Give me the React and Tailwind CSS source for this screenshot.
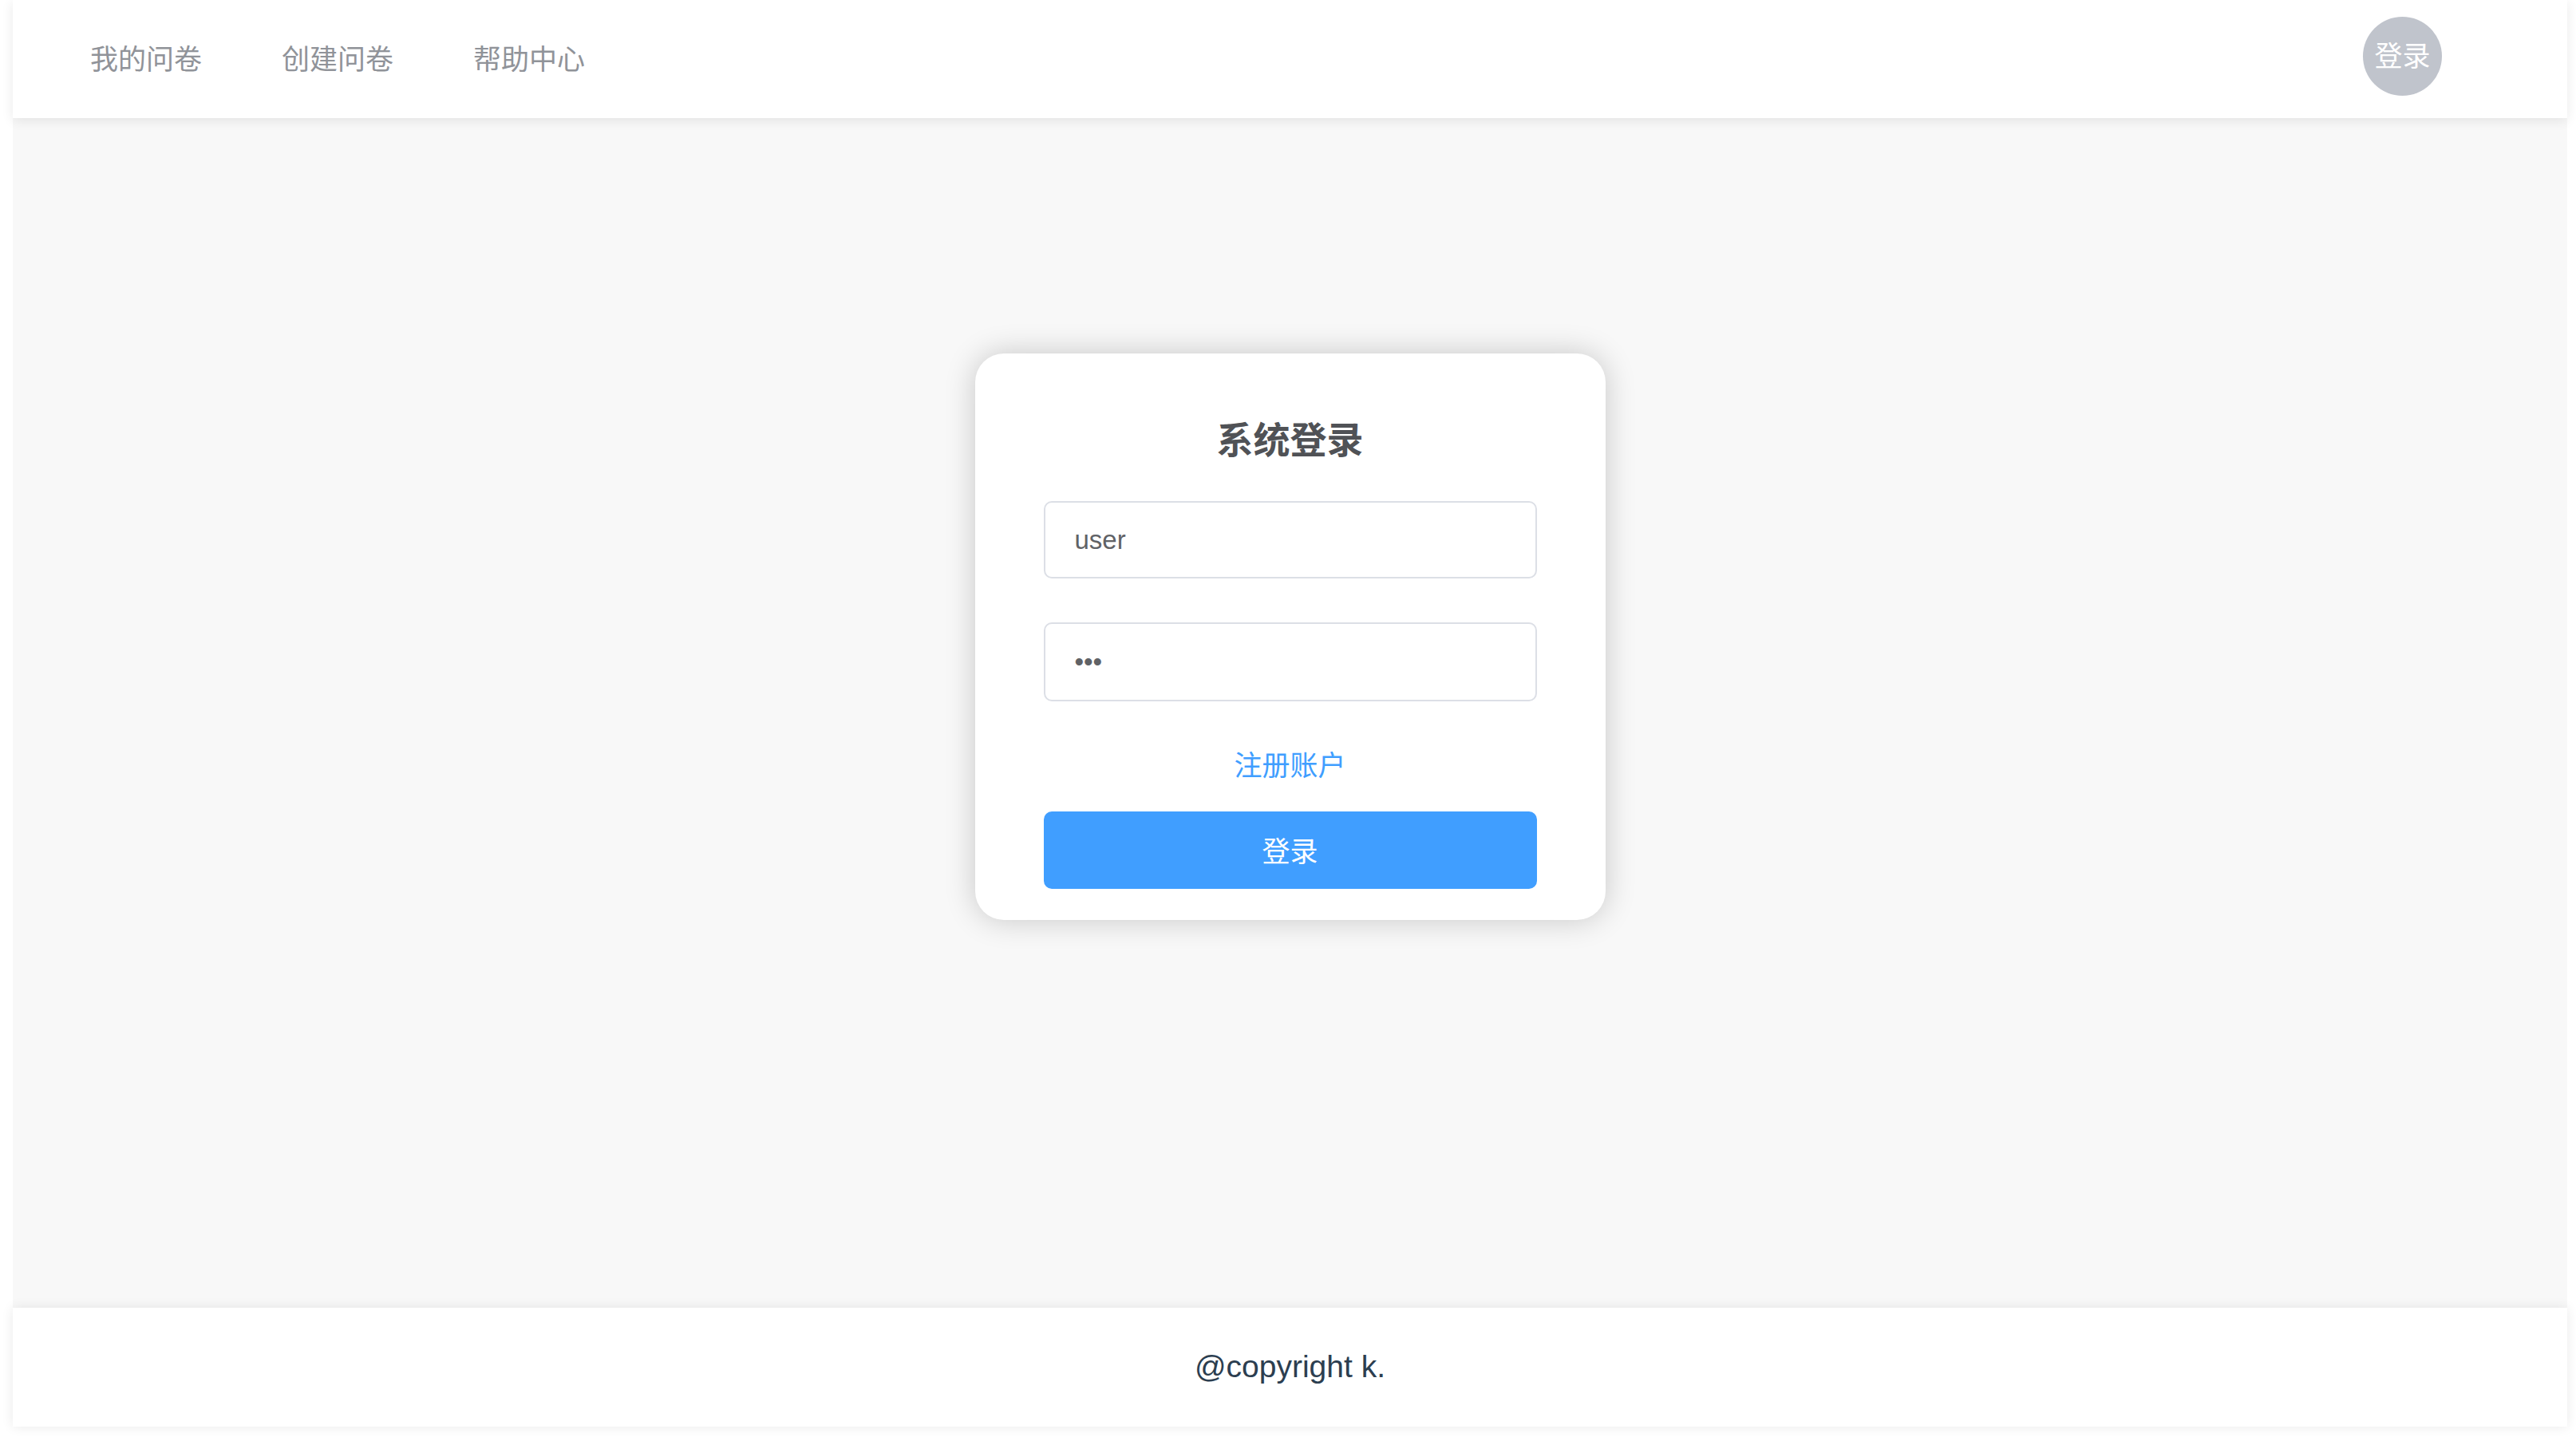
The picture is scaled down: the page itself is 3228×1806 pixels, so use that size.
import React, { useState } from "react";

const navItems = ["我的问卷", "创建问卷", "帮助中心"];

const App = () => {
  const [username, setUsername] = useState("user");
  const [password, setPassword] = useState("123");

  return (
    <div className="min-h-screen flex flex-col bg-white pl-[16px] pr-[11px] pb-[18px] font-['Liberation_Sans','Noto_Sans_CJK_SC',sans-serif]">
      {/* Header */}
      <header className="relative z-10 h-[148px] flex items-start justify-between bg-white shadow-[0_3px_14px_rgba(0,0,0,0.09)] pl-[97px] pr-[157px]">
        <nav className="flex items-center gap-[100px] mt-[52px]">
          {navItems.map((item) => (
            <a
              key={item}
              href="#"
              className="text-[35px] leading-[40px] text-[#909399] font-['Noto_Sans_CJK_SC',sans-serif]"
            >
              {item}
            </a>
          ))}
        </nav>
        <div className="mt-[21px] w-[99px] h-[99px] rounded-full bg-[#c0c4cc] flex items-center justify-center pb-[5px] text-white text-[35px] font-['Noto_Sans_CJK_SC',sans-serif]">
          登录
        </div>
      </header>

      {/* Main */}
      <main className="flex-1 bg-[#f8f8f8] flex justify-center pt-[295px]">
        <div className="w-[790px] h-[710px] bg-white rounded-[36px] shadow-[0_0_38px_rgba(0,0,0,0.2)] px-[86px] pt-[75px] pb-[39px] flex flex-col">
          <h2 className="text-center text-[46px] leading-[60px] font-bold text-[#505256] font-['Noto_Sans_CJK_SC',sans-serif]">
            系统登录
          </h2>
          <input
            type="text"
            value={username}
            onChange={(e) => setUsername(e.target.value)}
            className="mt-[50px] h-[97px] w-full border-2 border-[#dcdfe6] rounded-[10px] px-[37px] text-[33px] text-[#606266] outline-none"
          />
          <input
            type="password"
            value={password}
            onChange={(e) => setPassword(e.target.value)}
            className="mt-[55px] h-[99px] w-full border-2 border-[#dcdfe6] rounded-[10px] px-[37px] text-[33px] text-[#606266] outline-none"
          />
          <a
            href="#"
            className="mt-[53px] h-[50px] leading-[50px] text-center text-[35px] text-[#409eff] font-['Noto_Sans_CJK_SC',sans-serif]"
          >
            注册账户
          </a>
          <button className="mt-[35px] h-[97px] w-full rounded-[10px] bg-[#409eff] text-white text-[35px] font-['Noto_Sans_CJK_SC',sans-serif]">
            登录
          </button>
        </div>
      </main>

      {/* Footer */}
      <footer className="h-[149px] flex items-center justify-center bg-white shadow-[0_0_14px_rgba(0,0,0,0.09)] text-[39px] text-[#2c3e50]">
        @copyright k.
      </footer>
    </div>
  );
};

export default App;
